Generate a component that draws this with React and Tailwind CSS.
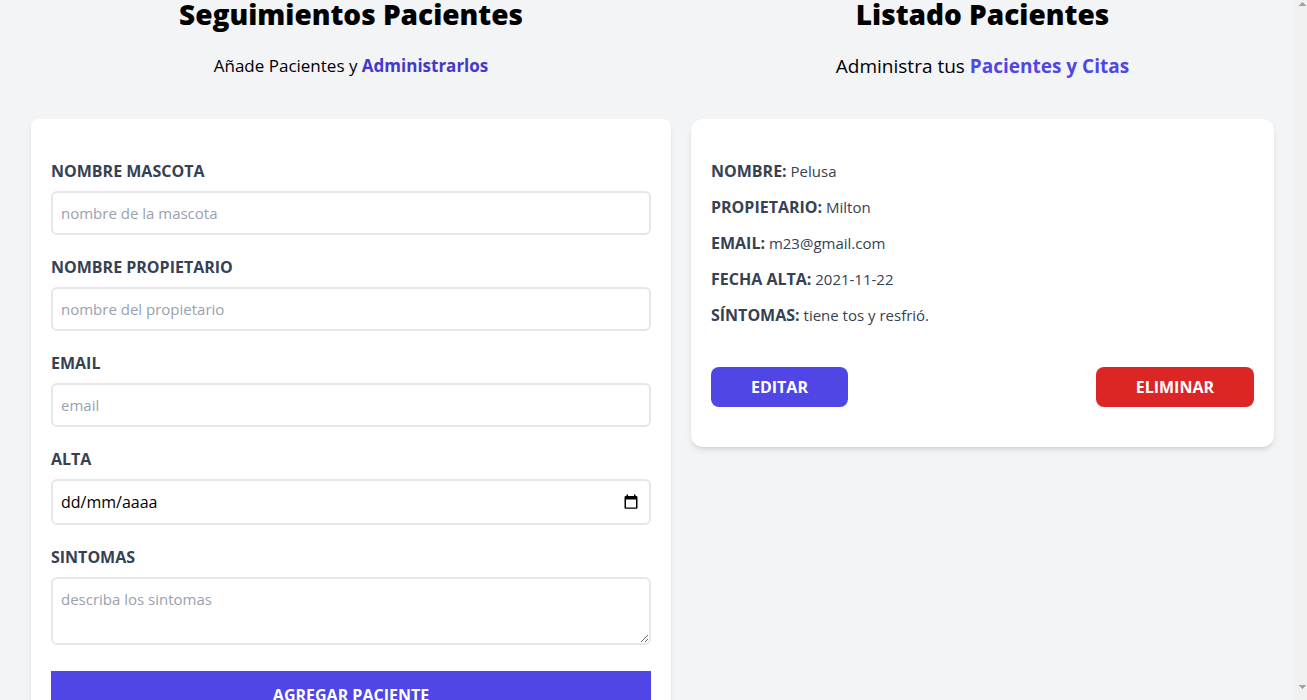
import React from "react";

const labelClass = "block font-bold uppercase text-gray-700 text-base leading-6";
const fieldClass =
  "block w-full mt-2 p-2 border-2 border-gray-200 rounded-md bg-white text-[15px] leading-6 placeholder-gray-400";

function Heading({ children }) {
  return <h2 className="font-extrabold text-[28px] leading-7 text-center text-black">{children}</h2>;
}

function Field({ id, label, children }) {
  return (
    <div className="mb-5">
      <label htmlFor={id} className={labelClass}>{label}</label>
      {children}
    </div>
  );
}

function CalendarIcon() {
  return (
    <svg viewBox="0 0 14 16" className="w-3.5 h-4" aria-hidden="true">
      <path d="M2.5 0.5h1.5v1.5h6V0.5h1.5v1.5h0.7c0.7 0 1.3 0.6 1.3 1.3v10.2c0 0.7-0.6 1.3-1.3 1.3H1.8c-0.7 0-1.3-0.6-1.3-1.3V3.3C0.5 2.6 1.1 2 1.8 2h0.7zM2 5.5v8h10v-8z" fill="#000" fillRule="evenodd" />
    </svg>
  );
}

function Formulario() {
  return (
    <section>
      <Heading>Seguimientos Pacientes</Heading>
      <p className="mt-6 mb-[39px] text-center text-[17px] leading-7 text-black">
        Añade Pacientes y <span className="font-bold text-[#4338ca]">Administrarlos</span>
      </p>
      <form className="bg-white shadow-md rounded-lg px-5 py-10 mb-10" onSubmit={(e) => e.preventDefault()}>
        <Field id="mascota" label="Nombre Mascota">
          <input id="mascota" type="text" placeholder="nombre de la mascota" className={fieldClass} />
        </Field>
        <Field id="propietario" label="Nombre Propietario">
          <input id="propietario" type="text" placeholder="nombre del propietario" className={fieldClass} />
        </Field>
        <Field id="email" label="Email">
          <input id="email" type="email" placeholder="email" className={fieldClass} />
        </Field>
        <Field id="alta" label="Alta">
          <div className="flex items-center mt-2 py-2 pl-2 pr-[11px] border-2 border-gray-200 rounded-md bg-white">
            <input
              id="alta"
              type="text"
              placeholder="dd/mm/aaaa"
              className="flex-1 min-w-0 h-[26px] text-base leading-6 placeholder-black"
            />
            <button type="button" aria-label="Abrir calendario"><CalendarIcon /></button>
          </div>
        </Field>
        <div className="mb-[26px]">
          <label htmlFor="sintomas" className={labelClass}>Sintomas</label>
          <textarea id="sintomas" rows={2} placeholder="describa los sintomas" className={fieldClass} />
        </div>
        <button type="submit" className="block w-full p-3 bg-[#4f46e5] text-white font-bold uppercase text-base leading-6">
          Agregar Paciente
        </button>
      </form>
    </section>
  );
}

const paciente = [
  ["Nombre", "Pelusa"],
  ["Propietario", "Milton"],
  ["Email", "m23@gmail.com"],
  ["Fecha Alta", "2021-11-22"],
  ["Síntomas", "tiene tos y resfrió."],
];

const actionClass = "px-10 py-2 rounded-lg text-white font-bold uppercase text-base leading-6";

function ListadoPacientes() {
  return (
    <section>
      <Heading>Listado Pacientes</Heading>
      <p className="mt-6 mb-[39px] text-center text-[19px] leading-7 text-black">
        Administra tus <span className="font-bold text-[#4f46e5]">Pacientes y Citas</span>
      </p>
      <article className="bg-white shadow-md rounded-xl px-5 py-10">
        {paciente.map(([k, v]) => (
          <p key={k} className="mb-3 text-[15px] leading-6 text-gray-700">
            <span className="font-bold uppercase text-base leading-6">{k}:</span> {v}
          </p>
        ))}
        <div className="flex justify-between mt-10">
          <button type="button" className={`${actionClass} bg-[#4f46e5]`}>Editar</button>
          <button type="button" className={`${actionClass} bg-[#dc2626]`}>Eliminar</button>
        </div>
      </article>
    </section>
  );
}

export default function App() {
  return (
    <div className="flex h-screen bg-gray-100 font-['Open_Sans','Noto_Sans',sans-serif]">
      <main className="flex-1 min-w-0 overflow-y-auto [scrollbar-width:none]">
        <div className="grid grid-cols-[640fr_583fr] gap-5 items-start pl-[31px] pr-5">
          <Formulario />
          <ListadoPacientes />
        </div>
      </main>
      <div className="w-[13px] shrink-0 flex flex-col justify-between items-end bg-[#f0f0f0] pt-0.5 pb-[11px] pr-px" aria-hidden="true">
        <svg viewBox="0 0 7 4" className="w-[7px] h-1"><path d="M3 0h1v1h1v1h1v1h1v1H0V3h1V2h1V1h1z" fill="#a3a3a3" /></svg>
        <svg viewBox="0 0 7 4" className="w-[7px] h-1"><path d="M0 0h7v1H6v1H5v1H4v1H3V3H2V2H1V1H0z" fill="#a3a3a3" /></svg>
      </div>
    </div>
  );
}
